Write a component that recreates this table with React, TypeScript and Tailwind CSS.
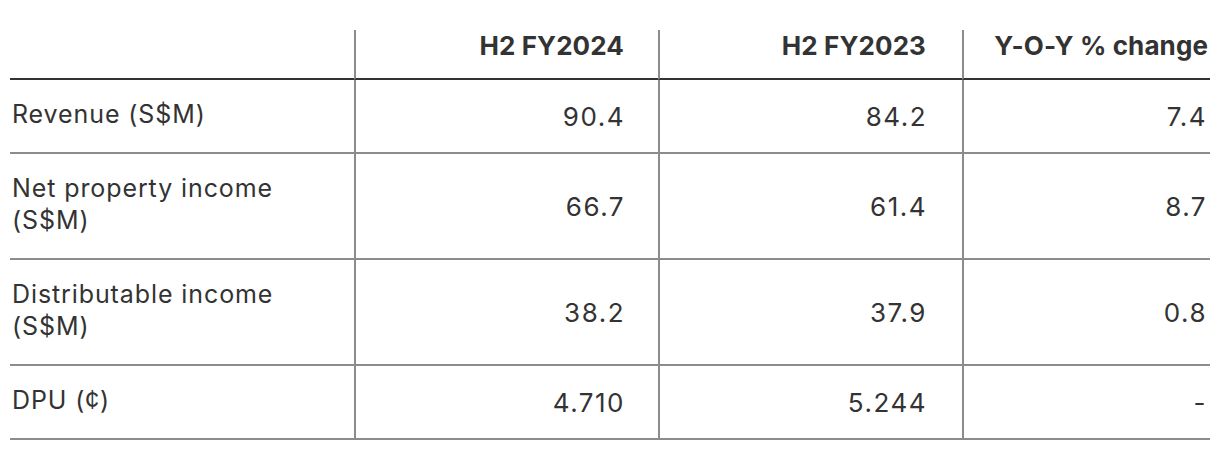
import React from "react";

const rows = [
    { label: "Revenue (S$M)", a: "90.4", b: "84.2", c: "7.4" },
    { label: "Net property income (S$M)", a: "66.7", b: "61.4", c: "8.7" },
    { label: "Distributable income (S$M)", a: "38.2", b: "37.9", c: "0.8" },
    { label: "DPU (¢)", a: "4.710", b: "5.244", c: "-" },
];

const App = () => {
    return (
        <div className="h-[450px] w-[1220px] bg-white px-[10px] pt-[30px] font-['Inter',sans-serif] text-[#333]">
            <table className="w-[1200px] table-fixed border-separate border-spacing-0">
                <colgroup>
                    <col className="w-[344px]" />
                    <col className="w-[304px]" />
                    <col className="w-[304px]" />
                    <col className="w-[248px]" />
                </colgroup>
                <thead>
                    <tr className="text-[26px] leading-[32px] font-bold">
                        <th className="border-b-2 border-[#333] pb-[16px]"></th>
                        <th className="border-b-2 border-l-2 border-b-[#333] border-l-[#8c8c8c] pb-[16px] pr-[34px] text-right tracking-[0.1px]">
                            H2 FY2024
                        </th>
                        <th className="border-b-2 border-l-2 border-b-[#333] border-l-[#8c8c8c] pb-[16px] pr-[36px] text-right tracking-[0.1px]">
                            H2 FY2023
                        </th>
                        <th className="border-b-2 border-l-2 border-b-[#333] border-l-[#8c8c8c] pb-[16px] pr-[2px] text-right tracking-[0.1px]">
                            Y-O-Y % change
                        </th>
                    </tr>
                </thead>
                <tbody>
                    {rows.map((row) => (
                        <tr key={row.label} className="leading-[32px]">
                            <td className="border-b-2 border-[#8c8c8c] pb-[22px] pl-[2px] pr-[60px] pt-[18px] align-middle text-[25px] tracking-[0.9px]">
                                {row.label}
                            </td>
                            <td className="border-b-2 border-l-2 border-[#8c8c8c] pb-[19px] pr-[33px] pt-[21px] text-right align-middle text-[26px] tracking-[1.5px]">
                                {row.a}
                            </td>
                            <td className="border-b-2 border-l-2 border-[#8c8c8c] pb-[19px] pr-[35px] pt-[21px] text-right align-middle text-[26px] tracking-[1.5px]">
                                {row.b}
                            </td>
                            <td className="border-b-2 border-l-2 border-[#8c8c8c] pb-[19px] pr-[3px] pt-[21px] text-right align-middle text-[26px] tracking-[1.5px]">
                                {row.c}
                            </td>
                        </tr>
                    ))}
                </tbody>
            </table>
        </div>
    );
};

export default App;
